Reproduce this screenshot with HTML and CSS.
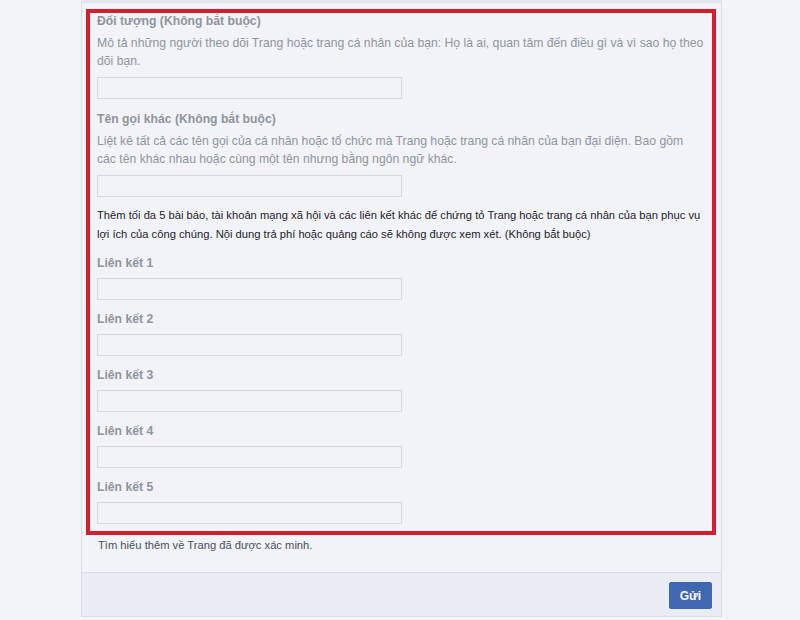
FILE: index.html
```html
<!DOCTYPE html>
<html lang="vi">
<head>
    <meta charset="UTF-8">
    <meta name="viewport" content="width=device-width, initial-scale=1.0">
    <title>Yêu cầu xác minh Trang</title>
    <link rel="stylesheet" href="styles.css">
</head>
<body>
    <div class="card">
        <div class="card-body">
            <div class="highlight">
                <div class="field">
                    <label class="field-label" for="audience">Đối tượng (Không bắt buộc)</label>
                    <p class="field-desc">Mô tả những người theo dõi Trang hoặc trang cá nhân của bạn: Họ là ai, quan tâm đến điều gì và vì sao họ theo dõi bạn.</p>
                    <input class="field-input" type="text" id="audience">
                </div>
                <div class="field">
                    <label class="field-label" for="aliases">Tên gọi khác (Không bắt buộc)</label>
                    <p class="field-desc">Liệt kê tất cả các tên gọi của cá nhân hoặc tổ chức mà Trang hoặc trang cá nhân của bạn đại diện. Bao gồm các tên khác nhau hoặc cùng một tên nhưng bằng ngôn ngữ khác.</p>
                    <input class="field-input" type="text" id="aliases">
                </div>

                <p class="links-intro">Thêm tối đa 5 bài báo, tài khoản mạng xã hội và các liên kết khác để chứng tỏ Trang hoặc trang cá nhân của bạn phục vụ lợi ích của công chúng. Nội dung trả phí hoặc quảng cáo sẽ không được xem xét. (Không bắt buộc)</p>

                <div class="field field-link">
                    <label class="field-label" for="link1">Liên kết 1</label>
                    <input class="field-input" type="text" id="link1">
                </div>
                <div class="field field-link">
                    <label class="field-label" for="link2">Liên kết 2</label>
                    <input class="field-input" type="text" id="link2">
                </div>
                <div class="field field-link">
                    <label class="field-label" for="link3">Liên kết 3</label>
                    <input class="field-input" type="text" id="link3">
                </div>
                <div class="field field-link">
                    <label class="field-label" for="link4">Liên kết 4</label>
                    <input class="field-input" type="text" id="link4">
                </div>
                <div class="field field-link">
                    <label class="field-label" for="link5">Liên kết 5</label>
                    <input class="field-input" type="text" id="link5">
                </div>
            </div>
            <p class="learn-more">Tìm hiểu thêm về Trang đã được xác minh.</p>
        </div>
        <div class="card-footer">
            <button class="submit-button" type="submit">Gửi</button>
        </div>
    </div>
</body>
</html>
```

FILE: styles.css
```css
body {
    margin: 0;
    padding: 0;
    background-color: #f2f4f9;
    font-family: "Liberation Sans", Arial, sans-serif;
    font-size: 12px;
    color: #1d2129;
}

.card {
    width: 641px;
    margin-left: 81px;
    box-sizing: border-box;
    background-color: #f1f3f9;
    border: 1px solid #dadde5;
    border-top: 3px solid #e2e5ec;
}

.card-body {
    padding: 6px 0 19px;
}

/* khung đỏ đánh dấu phần cần điền */
.highlight {
    margin: 0 5px 0 4px;
    padding: 0 7px 7px;
    border: 4px solid #d11f2d;
}

.field {
    display: flex;
    flex-direction: column;
    align-items: flex-start;
}

.field + .field {
    margin-top: 12px;
}

.field-label {
    display: block;
    line-height: 16px;
    font-size: 12.2px;
    font-weight: bold;
    color: #90949c;
}

.field-desc {
    margin: 5px 0 0;
    line-height: 18px;
    font-size: 12.2px;
    color: #90949c;
}

.field-input {
    width: 305px;
    height: 22px;
    margin: 7px 0 0;
    padding: 0 4px;
    box-sizing: border-box;
    background-color: #f1f3f9;
    border: 1px solid #d4d8e0;
    border-radius: 0;
    font: inherit;
}

.links-intro {
    margin: 9px 0 0;
    line-height: 19px;
    font-size: 11.2px;
    color: #1d2129;
}

.links-intro + .field-link {
    margin-top: 11px;
}

.field-link + .field-link {
    margin-top: 11px;
}

.learn-more {
    margin: 2px 0 0;
    padding: 0 16px;
    line-height: 16px;
    font-size: 11.2px;
    color: #4b4f56;
}

.card-footer {
    display: flex;
    justify-content: flex-end;
    padding: 9px 9px 7px;
    background-color: #e9ecf3;
    border-top: 1px solid #dadde5;
}

.submit-button {
    height: 27px;
    padding: 0 10px;
    background-color: #4267b2;
    border: 1px solid #4267b2;
    border-radius: 2px;
    color: #fff;
    font: bold 12px "Liberation Sans", Arial, sans-serif;
    cursor: pointer;
}
```
